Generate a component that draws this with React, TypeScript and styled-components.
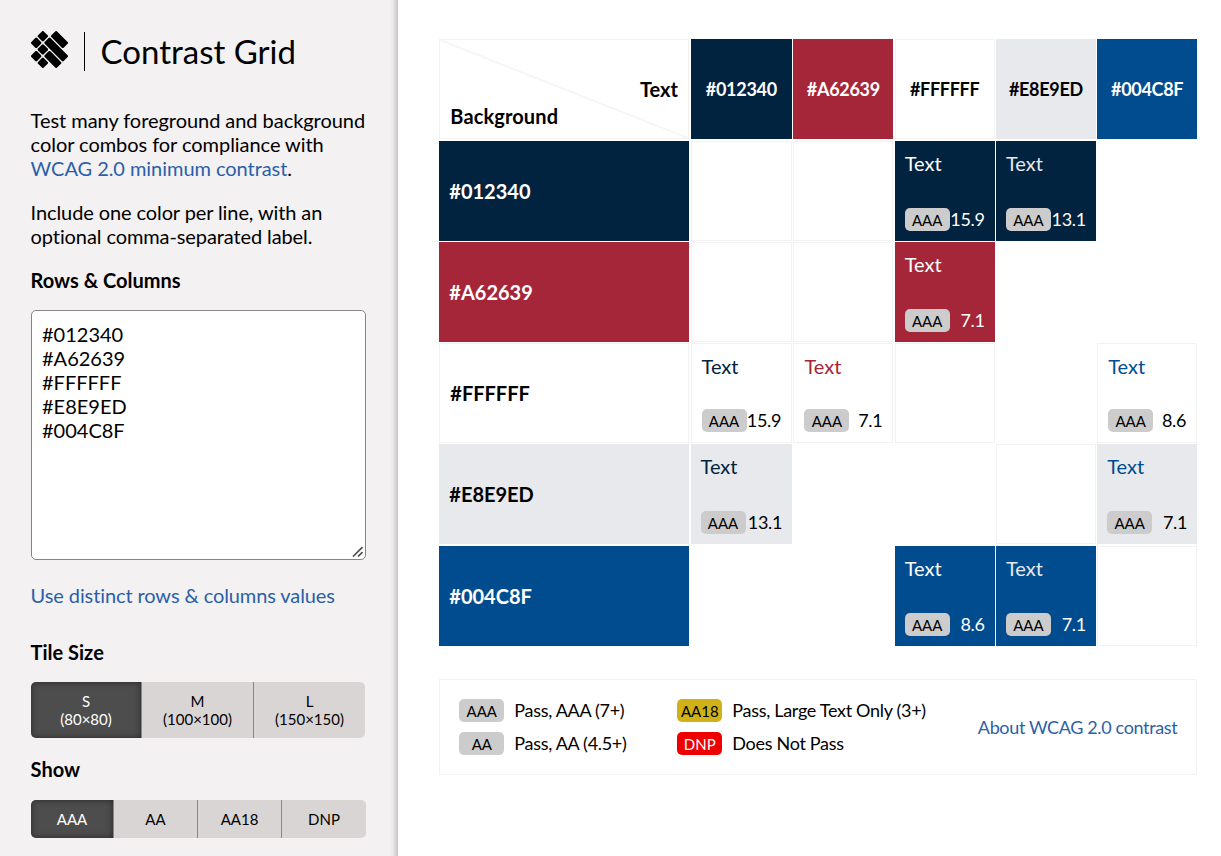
import React from "react";
import styled, { createGlobalStyle, css } from "styled-components";

const GlobalStyle = createGlobalStyle`
  *, *::before, *::after { box-sizing: border-box; }
  body {
    margin: 0;
    background: #fff;
    color: #000;
    font-family: Lato, "Open Sans", sans-serif;
    font-size: 20px;
    line-height: 24px;
    font-variant-ligatures: none;
  }
  h1, h2, p { margin: 0; }
`;

const Page = styled.div`
  display: flex;
  height: 100vh;
  overflow: hidden;
`;

const Sidebar = styled.aside`
  width: 398px;
  flex: none;
  padding: 31px 32px 0 31px;
  background: linear-gradient(to left, #c4c3c3, #d8d6d7 2.5px, #eae8e9 5px, #f3f1f2 8px);
  overflow: hidden;
`;

const Brand = styled.header`
  display: flex;
  align-items: flex-start;
  height: 78px;
`;

const Divider = styled.span`
  width: 1px;
  height: 39px;
  margin: 1px 15.6px 0 16px;
  background: #000;
`;

const Title = styled.h1`
  font-size: 33px;
  font-weight: 400;
  line-height: 40px;
`;

const Copy = styled.div`
  margin: -1px 0 0;
`;

const Paragraph = styled.p<{ $tracking: number }>`
  margin: 0 0 20px -0.4px;
  letter-spacing: ${(p) => p.$tracking}px;
  white-space: nowrap;
`;

const Link = styled.a`
  color: #2c5fa8;
  text-decoration: none;
`;

const Heading = styled.h2`
  margin-left: -0.4px;
  font-size: 20px;
  font-weight: 700;
  line-height: 24px;
`;

const InputFrame = styled.div`
  position: relative;
  width: 335px;
  margin: 18px 0 23px;
`;

const ColorInput = styled.textarea`
  display: block;
  width: 335px;
  height: 250px;
  padding: 11px 10px;
  border: 1px solid #858585;
  border-radius: 5px;
  background: #fff;
  color: #000;
  font: inherit;
  resize: none;
  outline: none;
`;

const Grip = styled.svg`
  position: absolute;
  right: 3px;
  bottom: 3px;
  stroke: #4a4a4a;
  stroke-width: 1.6;
`;

const DistinctLink = styled(Link)`
  display: block;
  margin-left: -0.4px;
  letter-spacing: -0.1px;
`;

const ButtonGroup = styled.div<{ $width: number }>`
  display: flex;
  width: ${(p) => p.$width}px;
  border-radius: 5px;
  overflow: hidden;
`;

const ToggleButton = styled.button<{ $active?: boolean; $tall?: boolean }>`
  flex: 1;
  height: ${(p) => (p.$tall ? 56 : 38)}px;
  padding: 0;
  border: 0;
  border-left: 1px solid #888;
  background: #d9d5d4;
  color: #000;
  font: 15px/18px Lato, sans-serif;
  ${(p) =>
    p.$active &&
    css`
      background: #4d4d4d;
      color: #fff;
      box-shadow: inset 0 0 6px rgba(0, 0, 0, 0.5);
    `}
  &:first-child { flex: 0 0 ${(p) => (p.$tall ? 110 : 82)}px; border-left: 0; }
`;

const SizeSection = styled.section`
  margin-top: 33px;
  ${ButtonGroup} { margin-top: 18px; }
`;

const ShowSection = styled.section`
  margin-top: 19px;
  ${ButtonGroup} { margin-top: 19px; }
  ${ToggleButton}:not(:first-child):not(:last-child) { flex: 0 0 84px; }
`;

const Main = styled.main`
  flex: 1;
  padding: 39.3px 24px 0 41.3px;
`;

const Grid = styled.div`
  display: grid;
  grid-template-columns: 250px 101.6px 100px 100px 100px 100px;
  grid-auto-rows: 100px;
  gap: 1.25px;
`;

const Corner = styled.div`
  display: grid;
  grid-template: 100% / 100%;
  border: 1px solid #f2f2f2;
  font-weight: 700;
  & > * { grid-area: 1 / 1; }
`;

const Diagonal = styled.svg`
  width: 100%;
  height: 100%;
  stroke: #f6f6f6;
  stroke-width: 2;
`;

const CornerText = styled.span`
  justify-self: end;
  padding: 37px 10.4px 0 0;
`;

const CornerBackground = styled.span`
  align-self: end;
  padding: 0 0 10px 10px;
  letter-spacing: 0.12px;
`;

const Tile = styled.div<{ $bg: string; $outlined?: boolean }>`
  background: ${(p) => p.$bg};
  ${(p) => p.$outlined && css`border: 1px solid #f2f2f2;`}
`;

const ColumnHeader = styled(Tile)<{ $fg: string }>`
  display: flex;
  align-items: center;
  justify-content: center;
  color: ${(p) => p.$fg};
  font-size: 18px;
  font-weight: 700;
  letter-spacing: -0.3px;
`;

const RowHeader = styled(Tile)<{ $fg: string }>`
  display: flex;
  align-items: center;
  padding: 0 10px;
  color: ${(p) => p.$fg};
  font-weight: 700;
`;

const Swatch = styled(Tile)<{ $fg: string }>`
  display: flex;
  flex-direction: column;
  justify-content: space-between;
  padding: 10px 10px 10px;
  color: ${(p) => p.$fg};
`;

const Score = styled.div<{ $light: boolean }>`
  display: flex;
  align-items: center;
  justify-content: space-between;
  height: 23px;
  color: ${(p) => (p.$light ? "#fff" : "#000")};
  font-size: 18px;
  line-height: 23px;
  letter-spacing: -0.3px;
`;

const Badge = styled.span<{ $bg?: string; $fg?: string }>`
  flex: none;
  width: 45px;
  height: 23px;
  padding-top: 1px;
  border-radius: 5px;
  background: ${(p) => p.$bg ?? "#ccc"};
  color: ${(p) => p.$fg ?? "#000"};
  font-size: 15px;
  line-height: 23px;
  letter-spacing: 0;
  text-align: center;
  white-space: nowrap;
`;

const Legend = styled.footer`
  display: flex;
  align-items: center;
  width: 758px;
  height: 96px;
  margin-top: 33px;
  padding: 0 19px;
  border: 1px solid #f2f2f2;
  font-size: 18px;
  letter-spacing: -0.3px;
`;

const LegendColumn = styled.div`
  display: flex;
  flex-direction: column;
  gap: 10px;
  width: 218px;
`;

const LegendItem = styled.div`
  display: flex;
  align-items: center;
  gap: 10px;
  height: 23px;
  white-space: nowrap;
`;

const AboutLink = styled(Link)`
  margin-left: auto;
  letter-spacing: -0.36px;
`;

const colors = ["#012340", "#A62639", "#FFFFFF", "#E8E9ED", "#004C8F"];
const isLight = (c: string) => c === "#FFFFFF" || c === "#E8E9ED";

const ratios: Record<string, string> = {
  "0-2": "15.9", "0-3": "13.1", "1-2": "7.1",
  "2-0": "15.9", "2-1": "7.1", "2-4": "8.6",
  "3-0": "13.1", "3-4": "7.1",
  "4-2": "8.6", "4-3": "7.1",
};
const emptyOutlined = ["0-0", "0-1", "1-0", "1-1", "2-2", "3-3", "4-4"];

const logoBars = [
  [1, 0, 1], [0, 1, 1], [1, 2, 1], [0, 3, 1], [1, 4, 1],
  [3, 0, 2], [2, 1, 3], [2, 3, 2],
];

function Logo() {
  const step = 6.65;
  const cell = step * Math.SQRT2;
  const side = 8.1;
  return (
    <svg width="37" height="37" viewBox="0 0 37 37" aria-hidden="true">
      {logoBars.map(([x, y, n]) => (
        <rect
          key={`${x}-${y}`}
          x={-side / 2}
          y={-side / 2}
          width={side + (n - 1) * cell}
          height={side}
          rx="1.3"
          transform={`translate(${5.2 + x * step} ${5.2 + y * step}) rotate(45)`}
        />
      ))}
    </svg>
  );
}

function Cell({ row, col }: { row: number; col: number }) {
  const key = `${row}-${col}`;
  const bg = colors[row];
  const ratio = ratios[key];
  if (ratio) {
    return (
      <Swatch $bg={bg} $fg={colors[col]} $outlined={bg === "#FFFFFF"}>
        <span>Text</span>
        <Score $light={!isLight(bg)}>
          <Badge>AAA</Badge>
          {ratio}
        </Score>
      </Swatch>
    );
  }
  return <Tile $bg="#fff" $outlined={emptyOutlined.includes(key)} />;
}

export default function App() {
  return (
    <>
      <GlobalStyle />
      <Page>
        <Sidebar>
          <Brand>
            <Logo />
            <Divider />
            <Title>Contrast Grid</Title>
          </Brand>
          <Copy>
            <Paragraph $tracking={-0.05}>
              Test many foreground and background
              <br />
              color combos for compliance with
              <br />
              <Link>WCAG 2.0 minimum contrast</Link>.
            </Paragraph>
            <Paragraph $tracking={-0.1}>
              Include one color per line, with an
              <br />
              optional comma-separated label.
            </Paragraph>
            <Heading>Rows &amp; Columns</Heading>
          </Copy>
          <InputFrame>
            <ColorInput defaultValue={colors.join("\n")} spellCheck={false} />
            <Grip width="11" height="11" viewBox="0 0 11 11">
              <path d="M1 10.5 10.5 1M6 10.5l4.5-4.5" />
            </Grip>
          </InputFrame>
          <DistinctLink>Use distinct rows &amp; columns values</DistinctLink>
          <SizeSection>
            <Heading>Tile Size</Heading>
            <ButtonGroup $width={334}>
              <ToggleButton $tall $active>S<br />(80×80)</ToggleButton>
              <ToggleButton $tall>M<br />(100×100)</ToggleButton>
              <ToggleButton $tall>L<br />(150×150)</ToggleButton>
            </ButtonGroup>
          </SizeSection>
          <ShowSection>
            <Heading>Show</Heading>
            <ButtonGroup $width={335}>
              <ToggleButton $active>AAA</ToggleButton>
              <ToggleButton>AA</ToggleButton>
              <ToggleButton>AA18</ToggleButton>
              <ToggleButton>DNP</ToggleButton>
            </ButtonGroup>
          </ShowSection>
        </Sidebar>
        <Main>
          <Grid>
            <Corner>
              <Diagonal viewBox="0 0 248 98" preserveAspectRatio="none">
                <line x1="0" y1="0" x2="248" y2="98" />
              </Diagonal>
              <CornerText>Text</CornerText>
              <CornerBackground>Background</CornerBackground>
            </Corner>
            {colors.map((c) => (
              <ColumnHeader key={c} $bg={c} $fg={isLight(c) ? "#000" : "#fff"} $outlined={c === "#FFFFFF"}>
                {c}
              </ColumnHeader>
            ))}
            {colors.map((bg, row) => (
              <React.Fragment key={bg}>
                <RowHeader $bg={bg} $fg={isLight(bg) ? "#000" : "#fff"} $outlined={bg === "#FFFFFF"}>
                  {bg}
                </RowHeader>
                {colors.map((fg, col) => (
                  <Cell key={fg} row={row} col={col} />
                ))}
              </React.Fragment>
            ))}
          </Grid>
          <Legend>
            <LegendColumn>
              <LegendItem><Badge>AAA</Badge>Pass, AAA (7+)</LegendItem>
              <LegendItem><Badge>AA</Badge>Pass, AA (4.5+)</LegendItem>
            </LegendColumn>
            <LegendColumn>
              <LegendItem><Badge $bg="#d0b218">AA18</Badge>Pass, Large Text Only (3+)</LegendItem>
              <LegendItem><Badge $bg="#e00" $fg="#fff">DNP</Badge>Does Not Pass</LegendItem>
            </LegendColumn>
            <AboutLink>About WCAG 2.0 contrast</AboutLink>
          </Legend>
        </Main>
      </Page>
    </>
  );
}
